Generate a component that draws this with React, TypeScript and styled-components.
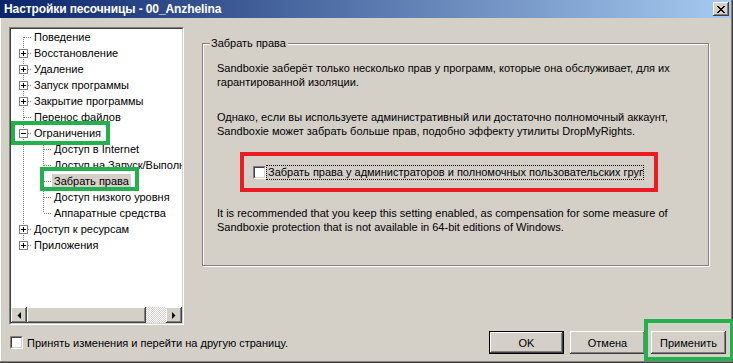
import React from 'react';
import styled, { createGlobalStyle, css } from 'styled-components';

const GlobalStyle = createGlobalStyle`
  html, body { margin: 0; padding: 0; background: #d4d0c8; }
  body {
    font-family: "Liberation Sans", Arial, sans-serif;
    font-size: 11px;
    color: #000;
  }
`;

const FONT = `"Liberation Sans", Arial, sans-serif`;

const raised = css`
  background: #d4d0c8;
  border: none;
  box-shadow: inset -1px -1px 0 #404040, inset 1px 1px 0 #ffffff,
    inset -2px -2px 0 #808080, inset 2px 2px 0 #d4d0c8;
`;

const Window = styled.div`
  position: relative;
  width: 733px;
  height: 363px;
  box-sizing: border-box;
  background: #d4d0c8;
  border-right: 1px solid #404040;
  border-bottom: 1px solid #404040;
  box-shadow: inset -1px -1px 0 #808080, inset 1px 0 0 #ffffff;
  display: flex;
  flex-direction: column;
`;

const TitleBar = styled.div`
  flex: none;
  height: 18px;
  margin-right: 1px;
  padding: 0 2px 0 4px;
  background: linear-gradient(to right, #0a246a, #a6caf0);
  display: flex;
  align-items: center;
  justify-content: space-between;
`;

const TitleText = styled.span`
  color: #fff;
  font-family: ${FONT};
  font-weight: bold;
  font-size: 12px;
  letter-spacing: -0.1px;
`;

const CloseButton = styled.button`
  ${raised};
  width: 16px;
  height: 14px;
  padding: 0;
  display: flex;
  align-items: center;
  justify-content: center;
`;

const Body = styled.div`
  flex: 1;
  display: flex;
  flex-direction: column;
  padding: 9px 6px 0 9px;
`;

const MainRow = styled.div`
  display: flex;
  align-items: flex-start;
  gap: 18px;
`;

const TreeFrame = styled.div`
  width: 175px;
  height: 298px;
  box-sizing: border-box;
  border: 1px solid;
  border-color: #808080 #ffffff #ffffff #808080;
`;

const TreeInner = styled.div`
  height: 100%;
  box-sizing: border-box;
  border: 1px solid;
  border-color: #404040 #d4d0c8 #d4d0c8 #404040;
  background: #fff;
  display: flex;
  flex-direction: column;
`;

const TreeList = styled.div`
  flex: 1;
  position: relative;
  overflow: hidden;
`;

const TreeRow = styled.div`
  position: relative;
  height: 16px;
  display: flex;
  align-items: center;
  white-space: nowrap;
`;

const TreeLabel = styled.span<{ $selected?: boolean }>`
  height: 15px;
  line-height: 15px;
  padding: 0 2px;
  background: ${(p) => (p.$selected ? '#d4d0c8' : 'transparent')};
`;

const Highlight = styled.div<{ $l: number; $t: number; $w: number; $h: number }>`
  position: absolute;
  z-index: 2;
  left: ${(p) => p.$l}px;
  top: ${(p) => p.$t}px;
  width: ${(p) => p.$w}px;
  height: ${(p) => p.$h}px;
  box-sizing: border-box;
  border: 4px solid #22b14c;
  pointer-events: none;
`;

const ScrollBar = styled.div`
  flex: none;
  height: 16px;
  display: flex;
`;

const ScrollArrow = styled.div`
  ${raised};
  flex: none;
  width: 16px;
  height: 16px;
  display: flex;
  align-items: center;
  justify-content: center;
`;

const ScrollThumb = styled.div`
  ${raised};
  flex: none;
  width: 119px;
  height: 16px;
`;

const ScrollTrack = styled.div`
  flex: 1;
  height: 16px;
  background: repeating-conic-gradient(#ffffff 0 25%, #d4d0c8 0 50%) 0 0 / 2px 2px;
`;

const GroupBox = styled.div`
  position: relative;
  margin-top: 16px;
  width: 507px;
  height: 223px;
  box-sizing: border-box;
  border: 1px solid #808080;
  box-shadow: 1px 1px 0 #ffffff, inset 1px 1px 0 #ffffff;
  padding: 0 0 0 14px;
  white-space: nowrap;
`;

const Legend = styled.span`
  position: absolute;
  top: -7px;
  left: 7px;
  padding: 0 2px 0 1px;
  background: #d4d0c8;
  line-height: 13px;
`;

const Para = styled.p<{ $mt: number }>`
  margin: ${(p) => p.$mt}px 0 0 0;
  line-height: 14px;
`;

const CheckFrame = styled.div`
  margin: 14px 0 0 23px;
  width: 418px;
  height: 40px;
  box-sizing: border-box;
  border: 4px solid #ed1c24;
  padding-left: 9px;
  display: flex;
  align-items: center;
`;

const CheckBox = styled.span`
  flex: none;
  width: 13px;
  height: 13px;
  box-sizing: border-box;
  border: 1px solid;
  border-color: #808080 #ffffff #ffffff #808080;
  &::after {
    content: '';
    display: block;
    width: 11px;
    height: 11px;
    box-sizing: border-box;
    border: 1px solid;
    border-color: #404040 #d4d0c8 #d4d0c8 #404040;
    background: #fff;
  }
`;

const FocusLabel = styled.span`
  width: 378px;
  box-sizing: border-box;
  overflow: hidden;
  border: 1px dotted #000;
  padding: 0 0 0 1px;
  line-height: 13px;
  white-space: nowrap;
`;

const BottomRow = styled.div`
  margin-top: 6px;
  display: flex;
  align-items: center;
  justify-content: space-between;
`;

const BottomCheck = styled.label`
  display: flex;
  align-items: center;
  gap: 4px;
  padding-left: 1px;
`;

const Buttons = styled.div`
  display: flex;
  gap: 6px;
`;

const ButtonWrap = styled.div`
  position: relative;
`;

const Button = styled.button<{ $default?: boolean }>`
  ${raised};
  width: 75px;
  height: 23px;
  padding: 0;
  font-family: ${FONT};
  font-size: 11px;
  color: #000;
  ${(p) =>
    p.$default &&
    css`
      box-shadow: inset 0 0 0 1px #000, inset -2px -2px 0 #404040, inset 2px 2px 0 #ffffff,
        inset -3px -3px 0 #808080;
    `}
`;

type Vert = 'none' | 'full' | 'top' | 'bottom';

interface Item {
  label: string;
  level: 0 | 1;
  v0: Vert;
  v1?: Vert;
  exp?: 'plus' | 'minus';
  selected?: boolean;
  hl?: { l: number; t: number; w: number; h: number };
}

const items: Item[] = [
  { label: 'Поведение', level: 0, v0: 'bottom' },
  { label: 'Восстановление', level: 0, v0: 'full', exp: 'plus' },
  { label: 'Удаление', level: 0, v0: 'full', exp: 'plus' },
  { label: 'Запуск программы', level: 0, v0: 'full', exp: 'plus' },
  { label: 'Закрытие программы', level: 0, v0: 'full', exp: 'plus' },
  { label: 'Перенос файлов', level: 0, v0: 'full' },
  { label: 'Ограничения', level: 0, v0: 'full', exp: 'minus', hl: { l: 0, t: -4, w: 99, h: 24 } },
  { label: 'Доступ в Internet', level: 1, v0: 'full', v1: 'full' },
  { label: 'Доступ на Запуск/Выполнение', level: 1, v0: 'full', v1: 'full' },
  { label: 'Забрать права', level: 1, v0: 'full', v1: 'full', selected: true, hl: { l: 29, t: -6, w: 99, h: 24 } },
  { label: 'Доступ низкого уровня', level: 1, v0: 'full', v1: 'full' },
  { label: 'Аппаратные средства', level: 1, v0: 'full', v1: 'top' },
  { label: 'Доступ к ресурсам', level: 0, v0: 'full', exp: 'plus' },
  { label: 'Приложения', level: 0, v0: 'top', exp: 'plus' },
];

const vSpan = (v: Vert): [number, number] | null =>
  v === 'full' ? [0, 16] : v === 'top' ? [0, 8] : v === 'bottom' ? [8, 16] : null;

function Connector({ item }: { item: Item }) {
  const w = item.level === 0 ? 21 : 41;
  const dot = { stroke: '#808080', strokeWidth: 1, strokeDasharray: '1 1', shapeRendering: 'crispEdges' as const };
  const s0 = vSpan(item.v0);
  const s1 = item.v1 ? vSpan(item.v1) : null;
  const hx = item.level === 0 ? 12 : 32;
  return (
    <svg width={w} height={16} style={{ flex: 'none' }}>
      {s0 && <line x1={12.5} x2={12.5} y1={s0[0]} y2={s0[1]} {...dot} />}
      {s1 && <line x1={32.5} x2={32.5} y1={s1[0]} y2={s1[1]} {...dot} />}
      <line x1={hx + 1} x2={w} y1={8.5} y2={8.5} {...dot} />
      {item.exp && (
        <g shapeRendering="crispEdges">
          <rect x={8.5} y={4.5} width={8} height={8} fill="#fff" stroke="#808080" />
          <line x1={10} x2={15} y1={8.5} y2={8.5} stroke="#000" />
          {item.exp === 'plus' && <line x1={12.5} x2={12.5} y1={6} y2={11} stroke="#000" />}
        </g>
      )}
    </svg>
  );
}

function Tree() {
  return (
    <TreeFrame>
      <TreeInner>
        <TreeList>
          {items.map((it) => (
            <TreeRow key={it.label}>
              <Connector item={it} />
              <TreeLabel $selected={it.selected}>{it.label}</TreeLabel>
              {it.hl && <Highlight $l={it.hl.l} $t={it.hl.t} $w={it.hl.w} $h={it.hl.h} />}
            </TreeRow>
          ))}
        </TreeList>
        <ScrollBar>
          <ScrollArrow>
            <svg width="4" height="7" viewBox="0 0 4 7"><path d="M4 0 L4 7 L0.5 3.5 Z" fill="#000" /></svg>
          </ScrollArrow>
          <ScrollThumb />
          <ScrollTrack />
          <ScrollArrow>
            <svg width="4" height="7" viewBox="0 0 4 7"><path d="M0 0 L0 7 L3.5 3.5 Z" fill="#000" /></svg>
          </ScrollArrow>
        </ScrollBar>
      </TreeInner>
    </TreeFrame>
  );
}

export default function App() {
  return (
    <>
      <GlobalStyle />
      <Window>
        <TitleBar>
          <TitleText>Настройки песочницы - 00_Anzhelina</TitleText>
          <CloseButton aria-label="Закрыть">
            <svg width="8" height="7" viewBox="0 0 8 7" shapeRendering="crispEdges">
              <path d="M0 0h2v1h1v1h2v-1h1v-1h2v1h-1v1h-1v1h-1v1h1v1h1v1h1v1h-2v-1h-1v-1h-2v1h-1v1h-2v-1h1v-1h1v-1h1v-1h-1v-1h-1v-1h-1z" fill="#000" />
            </svg>
          </CloseButton>
        </TitleBar>
        <Body>
          <MainRow>
            <Tree />
            <GroupBox>
              <Legend>Забрать права</Legend>
              <Para $mt={17}>
                Sandboxie заберёт только несколько прав у программ, которые она обслуживает, для их
                <br />
                гарантированной изоляции.
              </Para>
              <Para $mt={21}>
                Однако, если вы используете административный или достаточно полномочный аккаунт,
                <br />
                Sandboxie может забрать больше прав, подобно эффекту утилиты DropMyRights.
              </Para>
              <CheckFrame>
                <CheckBox />
                <FocusLabel>Забрать права у администраторов и полномочных пользовательских групп</FocusLabel>
              </CheckFrame>
              <Para $mt={14}>
                It is recommended that you keep this setting enabled, as compensation for some measure of
                <br />
                Sandboxie protection that is not available in 64-bit editions of Windows.
              </Para>
            </GroupBox>
          </MainRow>
          <BottomRow>
            <BottomCheck>
              <CheckBox />
              <span>Принять изменения и перейти на другую страницу.</span>
            </BottomCheck>
            <Buttons>
              <Button $default>OK</Button>
              <Button>Отмена</Button>
              <ButtonWrap>
                <Button>Применить</Button>
                <Highlight $l={-7} $t={-12} $w={90} $h={42} />
              </ButtonWrap>
            </Buttons>
          </BottomRow>
        </Body>
      </Window>
    </>
  );
}
